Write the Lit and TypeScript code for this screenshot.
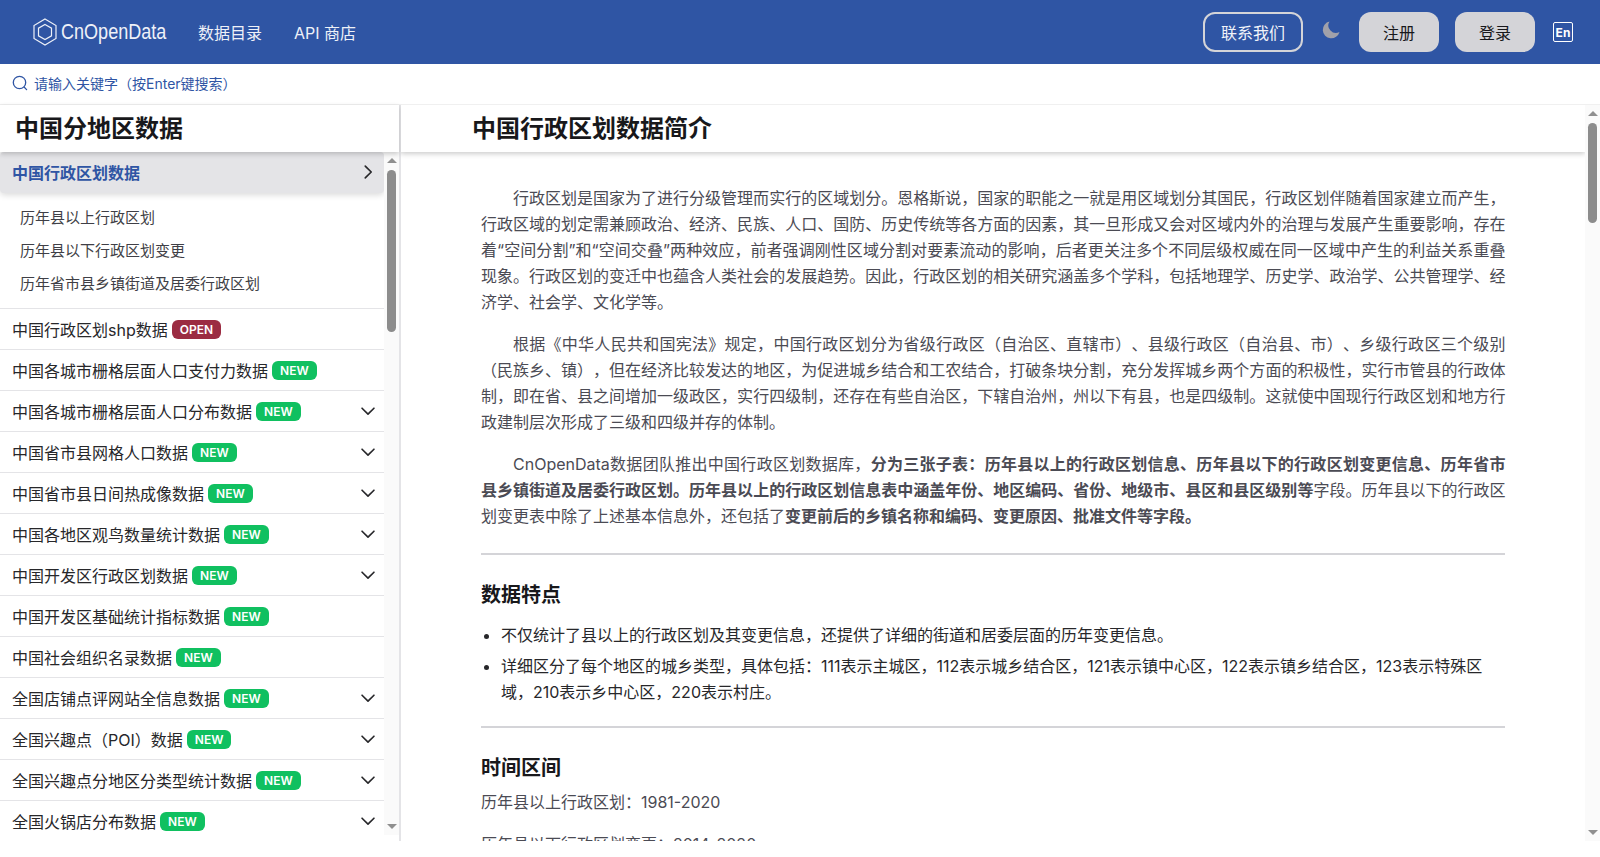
import { LitElement, html, css } from "lit";
import { customElement } from "lit/decorators.js";

const chevDown = html`<svg class="chev" viewBox="0 0 24 24" fill="none" stroke="currentColor" stroke-width="1.8" stroke-linecap="round" stroke-linejoin="round"><path d="M5.5 9l6.5 6.5L18.5 9"/></svg>`;
const chevRight = html`<svg class="chev" viewBox="0 0 24 24" fill="none" stroke="currentColor" stroke-width="1.8" stroke-linecap="round" stroke-linejoin="round"><path d="M9 5.5l6.5 6.5L9 18.5"/></svg>`;

const bar = (cls: string) => html`<div class="bar ${cls}">
  <svg class="arrow" viewBox="0 0 10 5"><path d="M0 5L5 0L10 5Z"/></svg>
  <div class="thumb"></div>
  <div class="fill"></div>
  <svg class="arrow" viewBox="0 0 10 5"><path d="M0 0L10 0L5 5Z"/></svg>
</div>`;

interface Item { name: string; badge: "NEW" | "OPEN"; chev: boolean }
const items: Item[] = [
  { name: "中国行政区划shp数据", badge: "OPEN", chev: false },
  { name: "中国各城市栅格层面人口支付力数据", badge: "NEW", chev: false },
  { name: "中国各城市栅格层面人口分布数据", badge: "NEW", chev: true },
  { name: "中国省市县网格人口数据", badge: "NEW", chev: true },
  { name: "中国省市县日间热成像数据", badge: "NEW", chev: true },
  { name: "中国各地区观鸟数量统计数据", badge: "NEW", chev: true },
  { name: "中国开发区行政区划数据", badge: "NEW", chev: true },
  { name: "中国开发区基础统计指标数据", badge: "NEW", chev: false },
  { name: "中国社会组织名录数据", badge: "NEW", chev: false },
  { name: "全国店铺点评网站全信息数据", badge: "NEW", chev: true },
  { name: "全国兴趣点（POI）数据", badge: "NEW", chev: true },
  { name: "全国兴趣点分地区分类型统计数据", badge: "NEW", chev: true },
  { name: "全国火锅店分布数据", badge: "NEW", chev: true },
];

@customElement("app-root")
export class AppRoot extends LitElement {
  static styles = css`
    :host { display: block; height: 857px; overflow: hidden; background: #fff; color: #1f2937;
      font-family: Inter, "Noto Sans CJK SC", "Noto Sans", sans-serif; font-size: 16px; text-spacing-trim: space-all; }
    .nav { height: 64px; background: #2f55a4; display: flex; align-items: center; padding: 0 27px 0 33px; color: #fff; box-sizing: border-box; }
    .logo { display: flex; align-items: center; gap: 4px; font-size: 22px; color: #eef1f8; width: 133px; font-family: "Liberation Sans", sans-serif; }
    .logo svg { width: 24px; height: 28px; flex: none; }
    .logo span { transform: scaleX(0.82); transform-origin: left; white-space: nowrap; }
    .links { display: flex; gap: 32px; margin-left: 32px; font-size: 16px; color: #eef1f8; }
    .spacer { flex: 1; }
    .contact { width: 100px; height: 40px; box-sizing: border-box; border: 2px solid #d4d4d8; border-radius: 12px; padding-bottom: 1px; display: flex; align-items: center; justify-content: center; color: #f1f3f9; }
    .moon { width: 20px; height: 20px; margin: 0 18px 4px 18px; }
    .btn { width: 80px; height: 40px; box-sizing: border-box; padding-bottom: 1px; background: #d4d4d8; border-radius: 12px; display: flex; align-items: center; justify-content: center; color: #18181b; margin-right: 16px; }
    .en { width: 20px; height: 20px; box-sizing: border-box; border: 1.5px solid #fff; border-radius: 2px; font-size: 12px; font-weight: 700; display: flex; align-items: center; justify-content: center; margin-left: 2px; }
    .search { height: 40px; display: flex; align-items: center; padding: 0 0 3px 12px; gap: 6px; color: #2f55a4; font-size: 14px; box-sizing: border-box; }
    .search svg { width: 16px; height: 16px; flex: none; }
    .body { display: flex; height: 737px; border-top: 1px solid #f0f0f0; box-sizing: border-box; }
    .side { width: 401px; flex: none; border-right: 2px solid #e4e4e7; box-sizing: border-box; display: flex; flex-direction: column; }
    .side h2 { margin: 0; height: 47px; font-size: 24px; line-height: 46px; font-weight: 700; padding-left: 15px; padding-top: 1px; box-sizing: border-box; color: #18181b; flex: none; box-shadow: 0 2px 5px rgba(0,0,0,.2); position: relative; z-index: 1; }
    .list { flex: 1; min-height: 0; display: flex; }
    .list-in { flex: 1; min-width: 0; overflow: hidden; }
    .bar { width: 15px; flex: none; background: #fafafa; display: flex; flex-direction: column; align-items: center; padding: 6px 0; box-sizing: border-box; }
    .bar.short { margin-bottom: 6px; }
    .arrow { width: 10px; height: 5px; flex: none; fill: #8f8f8f; }
    .thumb { width: 9px; border-radius: 4.5px; background: #8c8c8c; margin-top: 7px; flex: none; }
    .bar.short .thumb { height: 162px; }
    .bar.long .thumb { height: 100px; }
    .fill { flex: 1; }
    .row { height: 41px; display: flex; align-items: center; padding: 0 5px 1px 12px; border-bottom: 1px solid #e4e4e7; box-sizing: border-box; color: #27272a; }
    .row .chev { margin-left: auto; }
    .chev { width: 22px; height: 22px; flex: none; color: #27272a; }
    .active { height: 41px; box-sizing: border-box; display: flex; align-items: center; padding: 0 5px 1px 12px; background: #e4e4e7; border-radius: 4px; box-shadow: 0 2px 6px rgba(0,0,0,.15); color: #2f55a4; font-weight: 600; }
    .active .chev { margin-left: auto; }
    .subs { padding: 8px 0 8px 20px; border-bottom: 1px solid #e4e4e7; font-size: 15px; color: #3f3f46; }
    .subs div { height: 33px; line-height: 33px; }
    .badge { font-size: 12px; font-weight: 600; height: 19px; line-height: 19px; padding: 0 8px; border-radius: 6px; color: #fff; margin: 1px 0 0 4px; background: #10c060; }
    .badge.open { background: #9b2c42; }
    .scroll { flex: 1; min-width: 0; display: flex; }
    .main-in { flex: 1; min-width: 0; overflow: hidden; }
    .main-in h1 { margin: 0; height: 47px; line-height: 46px; padding-top: 1px; box-sizing: border-box; font-size: 24px; font-weight: 700; padding-left: 71px; color: #18181b; box-shadow: 0 2px 5px rgba(0,0,0,.2); position: relative; background: #fff; z-index: 1; }
    .content { width: 1024.5px; margin-left: 80px; padding-top: 33px; color: #4b4b54; line-height: 26px; font-size: 16px; }
    .content p { margin: 0 0 16px; text-indent: 2em; text-align: justify; }
    .content p.plain { text-indent: 0; }
    .content hr { border: none; width: 1024px; height: 2px; background: #d4d4d8; margin: 24px 0 26px; }
    .content h3 { margin: 0 0 7px; font-size: 20px; line-height: 28px; font-weight: 700; color: #18181b; }
    .content ul { margin: 13px 0 0; padding-left: 20px; color: #27272a; }
    .content li { margin-bottom: 5px; }
    .content ul + hr { margin-top: 21px; }
    b { font-weight: 700; }
  `;

  render() {
    return html`
      <div class="nav">
        <div class="logo">
          <svg viewBox="0 0 24 28" fill="none" stroke="#eef1f8" stroke-width="1.2"><path d="M12 1 L23 7.5 V20.5 L12 27 L1 20.5 V7.5 Z"/><path d="M12 6.5 L18.5 10.2 V17.8 L12 21.5 L5.5 17.8 V10.2 Z"/></svg>
          <span>CnOpenData</span>
        </div>
        <div class="links"><span>数据目录</span><span>API 商店</span></div>
        <div class="spacer"></div>
        <div class="contact">联系我们</div>
        <svg class="moon" viewBox="0 0 20 20"><path fill="#a1a1aa" d="M8.5 1.5A8.5 8.5 0 1 0 18.5 12 7.5 7.5 0 0 1 8.5 1.5z"/></svg>
        <div class="btn">注册</div>
        <div class="btn">登录</div>
        <div class="en">En</div>
      </div>
      <div class="search">
        <svg viewBox="0 0 16 16" fill="none" stroke="#2f55a4" stroke-width="1.3" stroke-linecap="round"><circle cx="7.5" cy="7.5" r="6.2"/><path d="M12.3 12.3L14.6 14.6"/></svg>
        <span>请输入关键字（按Enter键搜索）</span>
      </div>
      <div class="body">
        <div class="side">
          <h2>中国分地区数据</h2>
          <div class="list">
            <div class="list-in">
              <div class="active"><span>中国行政区划数据</span>${chevRight}</div>
              <div class="subs">
                <div>历年县以上行政区划</div>
                <div>历年县以下行政区划变更</div>
                <div>历年省市县乡镇街道及居委行政区划</div>
              </div>
              ${items.map((i) => html`<div class="row"><span>${i.name}</span><span class="badge ${i.badge === "OPEN" ? "open" : ""}">${i.badge}</span>${i.chev ? chevDown : ""}</div>`)}
            </div>
            ${bar("short")}
          </div>
        </div>
        <div class="scroll">
          <div class="main-in">
            <h1>中国行政区划数据简介</h1>
            <div class="content">
              <p>行政区划是国家为了进行分级管理而实行的区域划分。恩格斯说，国家的职能之一就是用区域划分其国民，行政区划伴随着国家建立而产生，行政区域的划定需兼顾政治、经济、民族、人口、国防、历史传统等各方面的因素，其一旦形成又会对区域内外的治理与发展产生重要影响，存在着“空间分割”和“空间交叠”两种效应，前者强调刚性区域分割对要素流动的影响，后者更关注多个不同层级权威在同一区域中产生的利益关系重叠现象。行政区划的变迁中也蕴含人类社会的发展趋势。因此，行政区划的相关研究涵盖多个学科，包括地理学、历史学、政治学、公共管理学、经济学、社会学、文化学等。</p>
              <p>根据《中华人民共和国宪法》规定，中国行政区划分为省级行政区（自治区、直辖市）、县级行政区（自治县、市）、乡级行政区三个级别（民族乡、镇），但在经济比较发达的地区，为促进城乡结合和工农结合，打破条块分割，充分发挥城乡两个方面的积极性，实行市管县的行政体制，即在省、县之间增加一级政区，实行四级制，还存在有些自治区，下辖自治州，州以下有县，也是四级制。这就使中国现行行政区划和地方行政建制层次形成了三级和四级并存的体制。</p>
              <p>CnOpenData数据团队推出中国行政区划数据库，<b>分为三张子表：历年县以上的行政区划信息、历年县以下的行政区划变更信息、历年省市县乡镇街道及居委行政区划。历年县以上的行政区划信息表中涵盖年份、地区编码、省份、地级市、县区和县区级别等</b>字段。历年县以下的行政区划变更表中除了上述基本信息外，还包括了<b>变更前后的乡镇名称和编码、变更原因、批准文件等字段。</b></p>
              <hr />
              <h3>数据特点</h3>
              <ul>
                <li>不仅统计了县以上的行政区划及其变更信息，还提供了详细的街道和居委层面的历年变更信息。</li>
                <li>详细区分了每个地区的城乡类型，具体包括：111表示主城区，112表示城乡结合区，121表示镇中心区，122表示镇乡结合区，123表示特殊区域，210表示乡中心区，220表示村庄。</li>
              </ul>
              <hr />
              <h3>时间区间</h3>
              <p class="plain">历年县以上行政区划：1981-2020</p>
              <p class="plain">历年县以下行政区划变更：2014-2020</p>
            </div>
          </div>
          ${bar("long")}
        </div>
      </div>
    `;
  }
}
